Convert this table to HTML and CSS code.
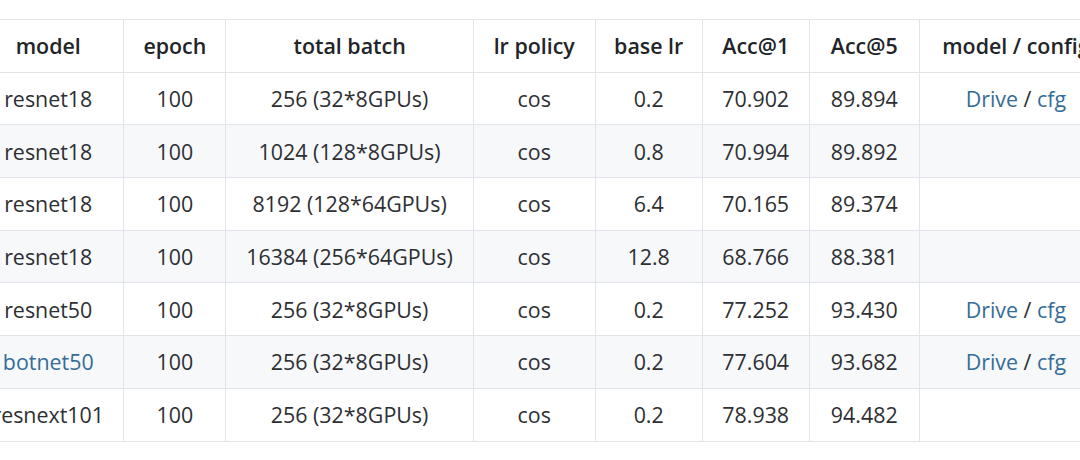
FILE: index.html
```html
<!DOCTYPE html>
<html>
<head>
<meta charset="utf-8">
<link rel="stylesheet" href="styles.css">
</head>
<body>
<div class="wrap">
<table class="results">
  <colgroup>
    <col class="c-model"><col class="c-epoch"><col class="c-batch"><col class="c-policy"><col class="c-lr"><col class="c-acc1"><col class="c-acc5"><col class="c-link">
  </colgroup>
  <thead>
    <tr><th>model</th><th>epoch</th><th>total batch</th><th>lr policy</th><th>base lr</th><th>Acc@1</th><th>Acc@5</th><th>model / config</th></tr>
  </thead>
  <tbody>
    <tr><td>resnet18</td><td>100</td><td>256 (32*8GPUs)</td><td>cos</td><td>0.2</td><td>70.902</td><td>89.894</td><td><a href="#">Drive</a> / <a href="#">cfg</a></td></tr>
    <tr><td>resnet18</td><td>100</td><td>1024 (128*8GPUs)</td><td>cos</td><td>0.8</td><td>70.994</td><td>89.892</td><td></td></tr>
    <tr><td>resnet18</td><td>100</td><td>8192 (128*64GPUs)</td><td>cos</td><td>6.4</td><td>70.165</td><td>89.374</td><td></td></tr>
    <tr><td>resnet18</td><td>100</td><td>16384 (256*64GPUs)</td><td>cos</td><td>12.8</td><td>68.766</td><td>88.381</td><td></td></tr>
    <tr><td>resnet50</td><td>100</td><td>256 (32*8GPUs)</td><td>cos</td><td>0.2</td><td>77.252</td><td>93.430</td><td><a href="#">Drive</a> / <a href="#">cfg</a></td></tr>
    <tr><td><a href="#">botnet50</a></td><td>100</td><td>256 (32*8GPUs)</td><td>cos</td><td>0.2</td><td>77.604</td><td>93.682</td><td><a href="#">Drive</a> / <a href="#">cfg</a></td></tr>
    <tr><td>resnext101</td><td>100</td><td>256 (32*8GPUs)</td><td>cos</td><td>0.2</td><td>78.938</td><td>94.482</td><td></td></tr>
  </tbody>
</table>
</div>
</body>
</html>
```

FILE: styles.css
```css
html, body {
  margin: 0;
  padding: 0;
  background: #ffffff;
  overflow: hidden;
  width: 1080px;
  height: 460px;
}
.wrap {
  padding-top: 19px;
  margin-left: -28px;
}
.results {
  border-collapse: collapse;
  table-layout: fixed;
  width: 1141px;
  font-family: "Open Sans", "Noto Sans", "DejaVu Sans", sans-serif;
  font-size: 21.4px;
  color: #2d2f33;
}
.c-model { width: 150.5px; }
.c-epoch { width: 101.3px; }
.c-batch { width: 246px; }
.c-policy { width: 121px; }
.c-lr { width: 106.5px; }
.c-acc1 { width: 106.3px; }
.c-acc5 { width: 109.4px; }
.c-link { width: 192px; }
.results th,
.results td {
  border: 1px solid #e1e4e8;
  height: 51.7px;
  padding: 0 2px;
  text-align: center;
  vertical-align: middle;
  white-space: nowrap;
  line-height: 1;
}
.results th {
  font-weight: 600;
  color: #222428;
}
.results tbody tr:nth-child(odd) td {
  background: #ffffff;
}
.results tbody tr:nth-child(even) td {
  background: #f6f8fa;
}
.results a {
  color: #356c98;
  text-decoration: none;
}
```
